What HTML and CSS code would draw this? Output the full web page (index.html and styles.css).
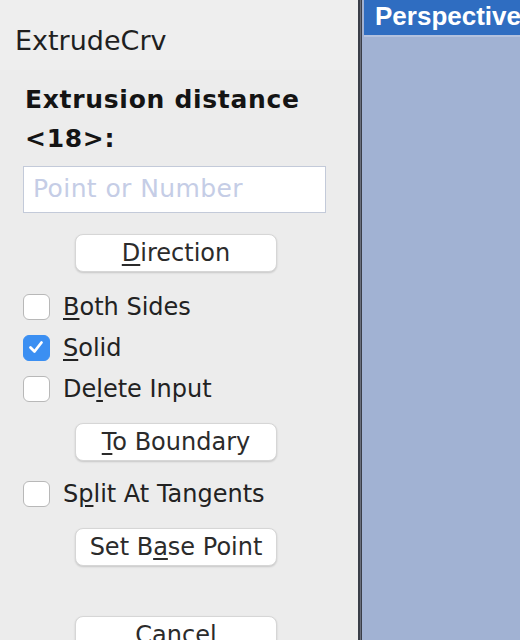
FILE: index.html
```html
<!DOCTYPE html>
<html>
<head>
<meta charset="utf-8">
<link rel="stylesheet" href="styles.css">
</head>
<body>
<div class="app">
  <div class="panel">
    <div class="title">ExtrudeCrv</div>
    <div class="prompt">Extrusion distance<br>&lt;18&gt;:</div>
    <div class="input">Point or Number</div>
    <div class="btn btn-dir"><u>D</u>irection</div>
    <div class="checks">
      <div class="row"><span class="cb"></span><span><u>B</u>oth Sides</span></div>
      <div class="row"><span class="cb checked"><svg viewBox="0 0 26 26" width="26" height="26"><path d="M7.5 13.5 L11.5 17.5 L18.5 8.5" fill="none" stroke="#fff" stroke-width="2.8" stroke-linecap="round" stroke-linejoin="round"/></svg></span><span><u>S</u>olid</span></div>
      <div class="row"><span class="cb"></span><span>De<u>l</u>ete Input</span></div>
    </div>
    <div class="btn btn-tb"><u>T</u>o Boundary</div>
    <div class="row row-split"><span class="cb"></span><span>S<u>p</u>lit At Tangents</span></div>
    <div class="btn btn-base">Set B<u>a</u>se Point</div>
    <div class="btn btn-cancel">Cancel</div>
  </div>
  <div class="divider"></div>
  <div class="viewport">
    <div class="vp-head">Perspective</div>
  </div>
</div>
</body>
</html>
```

FILE: styles.css
```css
html, body {
  margin: 0;
  padding: 0;
  width: 520px;
  height: 640px;
  overflow: hidden;
  font-family: "DejaVu Sans", "Liberation Sans", sans-serif;
}
.app {
  display: flex;
  width: 520px;
  height: 640px;
}
.panel {
  width: 358px;
  flex: none;
  background: #ececec;
  display: flex;
  flex-direction: column;
  color: #1e1e1e;
  overflow: hidden;
}
.panel > * {
  flex: none;
}
.title {
  height: 70px;
  box-sizing: border-box;
  padding: 25px 0 0 15px;
  font-size: 27px;
  line-height: 32px;
  background: #eeeeee;
  color: #1f1f1f;
}
.prompt {
  margin: 10px 0 0 25px;
  font-size: 25px;
  letter-spacing: 0.7px;
  line-height: 39px;
  font-weight: bold;
  color: #141414;
}
.input {
  margin: 8px 0 0 23px;
  width: 303px;
  height: 47px;
  box-sizing: border-box;
  border: 1.5px solid #c3cad9;
  background: #ffffff;
  padding-left: 9px;
  font-size: 25px;
  letter-spacing: 0.4px;
  line-height: 44px;
  color: #c5cde6;
  white-space: nowrap;
}
.btn {
  margin-left: 75px;
  width: 202px;
  height: 38px;
  box-sizing: border-box;
  background: #ffffff;
  border: 1px solid #d6d6d6;
  border-radius: 8px;
  box-shadow: 0 1px 2px rgba(0,0,0,0.16);
  text-align: center;
  font-size: 24px;
  line-height: 36px;
  color: #2b2b2b;
  white-space: nowrap;
}
.btn u, .row u {
  text-decoration-thickness: 2px;
  text-underline-offset: 3px;
}
.btn-dir { margin-top: 21px; }
.checks {
  margin-top: 14px;
  display: flex;
  flex-direction: column;
}
.row {
  height: 41px;
  display: flex;
  align-items: center;
  padding-left: 23px;
  font-size: 24px;
  color: #222;
  white-space: nowrap;
}
.cb {
  width: 27px;
  height: 26px;
  box-sizing: border-box;
  border: 1.5px solid #b8b8b8;
  border-radius: 6px;
  background: #fff;
  margin-right: 13px;
  flex: none;
  display: flex;
}
.cb.checked {
  background: #3b8ff2;
  border-color: #3b8ff2;
}
.cb svg { margin: -1.5px; }
.btn-tb { margin-top: 14px; }
.row-split { margin-top: 12px; }
.btn-base { margin-top: 14px; }
.btn-cancel { margin-top: 50px; }
.divider {
  width: 4px;
  flex: none;
  background: linear-gradient(to right, #3a3e48 0 2px, #6a6f7c 2px 3px, #3a3e48 3px 4px);
}
.viewport {
  flex: 1;
  min-width: 0;
  background: #a1b2d3;
  padding-left: 2px;
}
.vp-head {
  height: 35px;
  background: #2f6dc1;
  color: #ffffff;
  font-family: "Liberation Sans", Arial, sans-serif;
  font-weight: bold;
  font-size: 26px;
  line-height: 32px;
  padding-left: 11px;
  white-space: nowrap;
  overflow: hidden;
  border-bottom: 2px solid #b4c2de;
}
```
